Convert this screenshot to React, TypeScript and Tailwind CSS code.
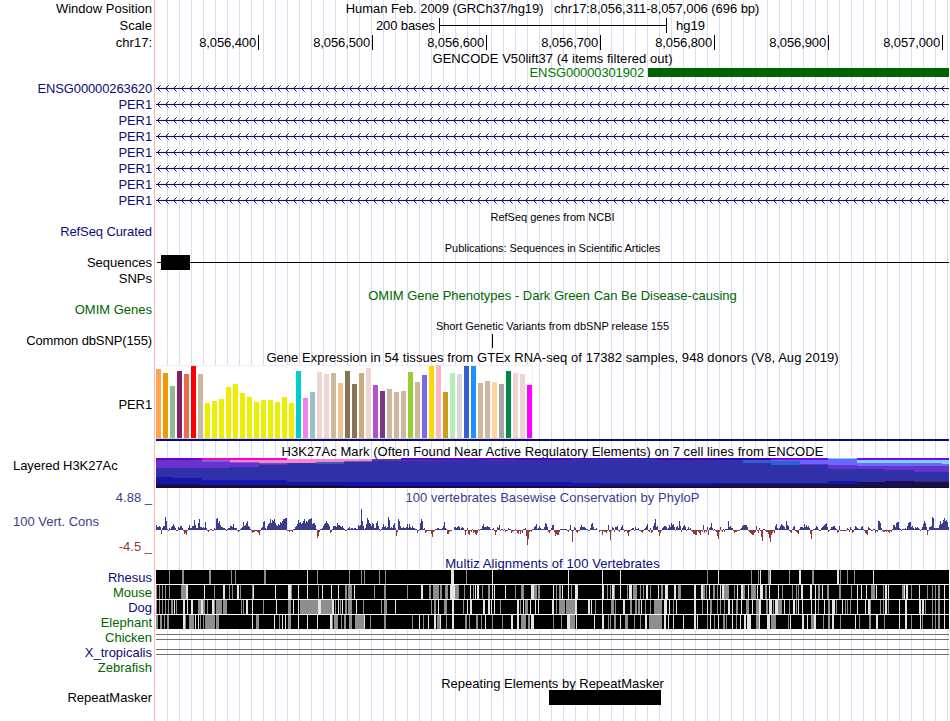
import type { ReactNode } from "react";
import clsx from "clsx";

interface RowProps {
  label?: string;
  labelClass?: string;
  className?: string;
  children?: ReactNode;
}

const NAVY = "text-[#0c0c78]";
const GREEN = "text-[#006400]";

const TICKS = ["8,056,400", "8,056,500", "8,056,600", "8,056,700", "8,056,800", "8,056,900", "8,057,000"];

const GENES = ["ENSG00000263620", "PER1", "PER1", "PER1", "PER1", "PER1", "PER1", "PER1"];

// [height, color] for each of the 54 tissues
const TISSUES: [number, string][] = [
  [69, "#ffa54f"], [65, "#ee9a00"], [52, "#8fbc8f"], [67, "#8b1c62"], [64, "#ee6a50"], [72, "#ff0000"],
  [64, "#cdb79e"], [35, "#eeee00"], [37, "#eeee00"], [39, "#eeee00"], [51, "#eeee00"], [54, "#eeee00"],
  [45, "#eeee00"], [41, "#eeee00"], [36, "#eeee00"], [38, "#eeee00"], [38, "#eeee00"], [36, "#eeee00"],
  [41, "#eeee00"], [35, "#eeee00"], [67, "#00cdcd"], [40, "#ee82ee"], [46, "#9ac0cd"], [66, "#eed5d2"],
  [64, "#eed5d2"], [65, "#cdb79e"], [55, "#eec591"], [67, "#8b7355"], [54, "#8b7355"], [65, "#cdaa7d"],
  [70, "#eed5d2"], [53, "#b452cd"], [47, "#7a378b"], [49, "#cdb79e"], [46, "#cdb79e"], [47, "#cdb79e"],
  [66, "#9acd32"], [56, "#cdb79e"], [63, "#7a67ee"], [72, "#ffd700"], [73, "#ffb6c1"], [46, "#cd9b1d"],
  [65, "#b4eeb4"], [64, "#d9d9d9"], [72, "#3a5fcd"], [72, "#1e90ff"], [55, "#cdb79e"], [57, "#cdb79e"],
  [56, "#ffd39b"], [54, "#a6a6a6"], [67, "#008b45"], [65, "#eed5d2"], [64, "#eed5d2"], [53, "#ff00ff"],
];

// [x1, x2, y1, y2, color], painted in order over the base block
const HISTONE: [number, number, number, number, string][] = [
  [156, 202, 0, 2, "#6a00d4"],
  [156, 230, 2, 10, "#6633cc"],
  [202, 287, 0, 2, "#ff00cc"],
  [202, 230, 2, 4, "#7a60d0"],
  [230, 259, 2, 4, "#ff80cc"],
  [230, 259, 4, 5, "#7a60d0"],
  [230, 259, 5, 9, "#6633cc"],
  [259, 287, 2, 5, "#ff80cc"],
  [259, 287, 5, 6, "#4a68b8"],
  [259, 287, 6, 7, "#6633cc"],
  [287, 316, 1, 5, "#ff80cc"],
  [316, 344, 1, 4, "#ff80cc"],
  [316, 344, 4, 6, "#3366a8"],
  [344, 372, 1, 3, "#ff80cc"],
  [344, 372, 3, 4, "#6060b0"],
  [372, 401, 1, 3, "#6030b0"],
  [401, 515, 0, 2, "#6a00c8"],
  [401, 429, 2, 3, "#5530b0"],
  [429, 458, 2, 3, "#4a30a8"],
  [486, 515, 2, 3, "#5030a8"],
  [515, 572, 0, 2, "#5000c8"],
  [572, 714, 0, 1, "#5000d8"],
  [657, 714, 0, 2, "#4800b8"],
  [714, 771, 0, 2, "#3000c8"],
  [743, 771, 2, 5, "#3060c8"],
  [771, 828, 0, 2, "#7a00ff"],
  [771, 800, 2, 3, "#6868ff"],
  [771, 800, 3, 7, "#3060c8"],
  [800, 828, 2, 6, "#6868ff"],
  [800, 828, 6, 7, "#6633cc"],
  [828, 857, 0, 1, "#70d0ff"],
  [828, 857, 1, 7, "#6868ff"],
  [828, 885, 7, 11, "#6633cc"],
  [857, 949, 0, 2, "#7a00ff"],
  [857, 949, 2, 5, "#78d4ff"],
  [857, 949, 5, 8, "#6868ff"],
  [885, 914, 8, 12, "#6633cc"],
  [914, 949, 8, 14, "#6633cc"],
  [942, 949, 5, 6, "#78d4ff"],
  [156, 173, 19, 30, "#1616a8"],
  [173, 202, 20, 30, "#1616a8"],
  [202, 287, 22, 30, "#1616a8"],
  [287, 543, 24, 30, "#1616a8"],
  [543, 572, 24, 30, "#1616a8"],
  [572, 771, 25, 30, "#1616a8"],
  [771, 828, 25, 30, "#1616a8"],
  [828, 857, 23, 30, "#1616a8"],
  [156, 202, 26, 30, "#181050"],
  [202, 344, 27, 30, "#181050"],
  [344, 600, 28, 30, "#181050"],
  [600, 714, 27, 30, "#181050"],
  [714, 857, 26, 30, "#181050"],
  [857, 885, 24, 30, "#181050"],
  [885, 949, 23, 30, "#181050"],
  [914, 949, 23, 24, "#303060"],
  [156, 949, 29, 30, "#180a30"],
  [156, 344, 28, 30, "#180a30"],
  [942, 949, 28, 30, "#180a30"],
];

// Runs of per-pixel scores: a..z is 1..26 above the axis, A..Z below it
const SCORES: [number, string][] = [
  [156, "eccdcDbddmiaAbacdfdbAAcbddbADCEAbe"],
  [190, "bbddjebbgkccbcbhbABAaaAAbaklgieccbbaAabbddcfbb"],
  [236, "bABAabchdegidcaACBBAABCEAbchibadfgkgjik"],
  [275, "gedfehgikkllAABAABaacdfjghfgikgihjkmhib"],
  [310, "klfggeaHFBaabdfgigfdCBadddcgeedcdbaAAabcabbabbaab"],
  [358, "edeuidabfljgfdgfbbgidaAacfcd"],
  [386, "bcmjbcbegbFBkidbbcbbcfbfcbdbbaaCAagkiabCBAAAAAA"],
  [430, "ADGBAaabbaaabdhbaDDBAA"],
  [454, "ccbcdcabcbAEAbDEABaCBDECaAaadfcccdcca"],
  [492, "abAEBcbeAaaAaBAAbaaCBAAaACDA"],
  [520, "DACaabFOIBABaacdfabdbaaacgfcBCAbeeBFDEEBaaa"],
  [563, "aaaaABaeALAcbBCAAcecccbaaAAbfgcaab"],
  [599, "BAAEABBCAeBJAcbBccdABaceaBAACFBAabbAcaabAA"],
  [641, "BCAabdfABbCBdgkcdBFCAbcddcabecgefcAcdbidBbdecAacab"],
  [691, "ABDDEEABCEABeCABcEbcgbAaABFIBcABaBaaaicdbBA"],
  [732, "bACBBAAAabdeeeecABCDEECBdACbAGKFD"],
  [763, "aaABBDHLECACdfbabdfedcaiedABCacdABCDacccBCDBABA"],
  [803, "bfcecdbDIAaabdcaAAbcdefgcBAaccddbaCBdAAAAAAAbaBcabba"],
  [852, "CBadcbaaacdaACDEcbaAAaaCABiigbABBABABCABaa"],
  [893, "eecghhbaAaaabadghhcdbacbcbaAacfigcEAccdmlaAafedc"],
  [934, "bbbbbeifgjlijhcdD"],
];

// Stripes on the alignment rows: x position, shade (g grey / w white), width
const SPECIES = [
  {
    name: "Rhesus",
    color: NAVY,
    stripes:
      "169g1 182g2 209g2 231g1 235g1 264g2 307w1 317g1 349g1 361g1 364g1 379g1 385g1 451w3 466g1 492w1 568w1 602w1 620w1 707g1 718w1 751g1 758g1 760w1 768g2 770w1 789g1 799w2 812g2 837w2 840g1 847g1 854g1 873w1",
  },
  {
    name: "Mouse",
    color: GREEN,
    stripes:
      "156g1 159g1 162g1 165g1 169g1 181g5 186w2 204w1 214g1 223w2 229g1 232g1 237w2 240g1 252g1 253w1 275w1 288w3 291g1 298w1 307w1 318g1 322w1 331w1 338w1 345g2 348g4 354w1 374g1 384g2 407g1 421w2 429g2 433g6 440g2 445g3 450w5 455g4 464g1 470w1 473g1 475w1 477w2 482g1 488g2 492w1 494w1 505w1 515g1 521g3 531w3 534g3 538g2 553w1 556g1 559g2 562w1 568w1 571g1 575w3 602w2 607g1 610g1 612w2 614g1 620w1 627g1 629w3 633g4 640g1 643g1 646w2 650g1 658w1 661g2 665w3 674w2 678g3 694w2 701w2 703g2 706g1 709w1 713g2 717g1 720w1 722w2 724g5 734g1 737w1 741w2 743g2 748w1 751g5 757w1 760w3 765g2 769w1 778w1 782g1 792g1 796g1 798g1 801w2 810w2 815w1 818g2 822w1 827g2 839g2 851g1 857w1 861w1 866w1 871g4 876w1 883g1 885w2 888w1 902g2 904w1 906w2 911g1 919w1 927g1 932g1 935g1 938g2 944w1",
  },
  {
    name: "Dog",
    color: NAVY,
    stripes:
      "156g1 159g1 162g1 165g1 168g1 171g2 174w1 176g1 183w2 187w1 191w2 198g3 201w2 203g2 207g1 212w2 214g1 216g6 223g4 241g1 243g1 246w2 252w1 263g1 276w1 288g3 293w1 298w1 300g33 318w3 332w2 335g1 338w1 340g1 342w1 345g2 348g4 356w1 363g1 381g1 384g3 395w1 431g1 434g2 438w1 444g3 452w2 463g1 467w1 470w2 483w2 488w2 491w1 494w1 500g1 517w2 520g1 523w1 525g3 530w1 535w1 538w1 552w2 556g1 559g6 566g9 575w2 588w2 591w1 595g1 602w1 611g3 615g1 623w2 630g2 635g2 638g2 641w1 645g1 650g1 654g3 657g5 664w3 669w1 673g1 676w1 694w2 702g1 707w1 710g2 717g1 720g1 724g1 728w2 732w1 736g2 741w1 746g3 752w1 756g4 759w2 766g2 769w3 773g1 775w3 778g4 784w1 789g1 793w2 796g1 798w1 802w1 811w1 815w1 818g1 824w1 828g2 832w3 836g1 842w1 845g1 847g1 850g1 857w1 865w1 868w2 870g1 880g1 883g1 885w2 888g1 899w1 905w2 919w2 922w2 925g1 932g1 935g1 938g2 944w1",
  },
  {
    name: "Elephant",
    color: GREEN,
    stripes:
      "156g2 160g2 164g1 167g2 183w2 185g1 189g5 195w1 198w1 200g1 203g1 205g10 216g3 252w1 256g3 274w1 279g1 282w1 285w1 288g3 298w1 307w1 317w1 330w2 332g1 334g4 341g1 344g2 349g3 355g9 364w1 370g1 384g2 412g1 419w1 423g1 428w1 434w2 437g3 440w1 446g1 452w2 465g2 469g1 476g2 481g1 485w1 492g1 502g1 511w2 517w2 521g5 528g2 531w3 553g1 561g1 567w3 570g5 576w1 594w1 602w2 608g1 610g1 614g2 620w1 625g3 634g1 640g1 645w2 649g13 664w2 668w1 673w1 683w1 694w2 697w1 707g1 710w1 714g1 718w1 723g2 726g1 732w1 736g1 740w1 744w2 747w4 756g3 759w1 767w3 771g5 788g1 790w1 802w2 807w1 811g3 814w2 823g1 828g2 832w2 840g1 855w1 859g1 869g2 876w2 884g1 899w1 905w2 911g1 920w1 922g1 932g1 935g1 938g2 944w1",
  },
];

function Row({ label, labelClass, className, children }: RowProps) {
  return (
    <div className={clsx("flex shrink-0", className)}>
      <div className={clsx("flex w-[152px] shrink-0 items-center justify-end", labelClass)}>{label}</div>
      <div className="ml-[3px] flex w-[795px] shrink-0 items-center justify-center">{children}</div>
    </div>
  );
}

function Arrows() {
  const heads = Array.from({ length: 99 }, (_, i) => 2 + i * 8);
  return (
    <svg width="795" height="16" shapeRendering="crispEdges">
      <rect x="1" y="8" width="793" height="1" fill="#0c0c78" />
      <path d={heads.map((x) => `M${x} 8h1v1h-1zM${x + 1} 7h1v3h-1zM${x + 2} 6h1v1h-1zM${x + 2} 10h1v1h-1z`).join("")} fill="#0c0c78" />
      <path d={heads.map((x) => `M${x + 3} 5h1v1h-1zM${x + 3} 11h1v1h-1z`).join("")} fill="#8c8cc8" />
    </svg>
  );
}

function Expression() {
  return (
    <svg width="795" height="76" shapeRendering="crispEdges">
      <rect x="1" y="0" width="377" height="74" fill="#f0f0f0" />
      <rect x="1" y="1" width="376" height="72" fill="#fff" />
      <rect x="1" y="73" width="377" height="1" fill="#d0d0d0" />
      {TISSUES.map(([h, fill], i) => (
        <rect key={i} x={1 + i * 7} y={73 - h} width="5" height={h} fill={fill} />
      ))}
      <rect x="1" y="74" width="793" height="2" fill="#0c0c78" />
    </svg>
  );
}

function Histone() {
  return (
    <svg width="795" height="30" viewBox="155 0 795 30" shapeRendering="crispEdges">
      <rect x="156" y="1" width="793" height="29" fill="#3030a8" />
      {HISTONE.map(([x1, x2, y1, y2, fill], i) => (
        <rect key={i} x={x1} y={y1} width={x2 - x1} height={y2 - y1} fill={fill} />
      ))}
    </svg>
  );
}

function Conservation() {
  let up = "";
  let down = "";
  SCORES.forEach(([start, run], r) => {
    const end = SCORES[r + 1]?.[0] ?? 949;
    for (let i = 0; i < run.length && start + i < end; i++) {
      const c = run.charCodeAt(i);
      const x = start + i;
      if (c >= 97) up += `M${x} 25h1v${96 - c}h-1z`;
      else down += `M${x} 25h1v${c - 64}h-1z`;
    }
  });
  return (
    <svg width="795" height="50" viewBox="155 0 795 50" shapeRendering="crispEdges">
      <path d={up} fill="#3c3c8c" />
      <path d={down} fill="#8c3c3c" />
    </svg>
  );
}

function Alignment({ stripes }: { stripes: string }) {
  return (
    <svg width="795" height="15" viewBox="155 0 795 15" shapeRendering="crispEdges">
      <rect x="156" y="0" width="793" height="15" fill="#fff" />
      <rect x="156" y="0" width="793" height="14" fill="#000" />
      {stripes.split(" ").map((s) => (
        <rect key={s} x={s.slice(0, 3)} y="0" width={s.slice(4)} height="14" fill={s[3] === "g" ? "#8e8e8e" : "#e4e4e4"} />
      ))}
    </svg>
  );
}

function DoubleLine() {
  return (
    <div className="flex h-[15px] w-[793px] flex-col pt-1">
      <div className="h-1.5 border-y border-[#707070] bg-transparent" />
    </div>
  );
}

export default function App() {
  return (
    <div className="relative h-[721px] w-[950px] overflow-hidden bg-white font-['Liberation_Sans',sans-serif] text-[13px] leading-none whitespace-pre text-black">
      {/* guide lines behind the tracks */}
      <div className="absolute top-0 left-[154px] h-[721px] w-px bg-[#ffb4b4]" />
      <div className="absolute top-0 left-[156px] h-[721px] w-[793px] bg-[repeating-linear-gradient(to_right,transparent_0px,transparent_11px,#dcdcf5_11px,#dcdcf5_12px)]" />

      <div className="relative flex flex-col">
        <Row label="Window Position" className="h-[17px]">
          <span className="tracking-[-0.06px]">Human Feb. 2009 (GRCh37/hg19)   chr17:8,056,311-8,057,006 (696 bp)</span>
        </Row>
        <Row label="Scale" className="h-[17px]">
          <div className="flex w-full items-center">
            <span className="w-[280px] text-right tracking-[-0.1px]">200 bases</span>
            <div className="ml-1 flex h-[15px] w-[228px] items-center border-x border-black">
              <div className="h-px w-full bg-black" />
            </div>
            <span className="ml-[9px]">hg19</span>
          </div>
        </Row>
        <Row label="chr17:" className="h-4">
          <div className="flex w-full">
            {TICKS.map((t, i) => (
              <div key={t} className={clsx("flex h-[15px] shrink-0 items-center justify-end border-r border-black pr-[2px] tracking-[-0.12px]", i === 0 ? "w-[104px]" : "w-[114px]")}>
                {t}
              </div>
            ))}
          </div>
        </Row>
        <Row className="h-4">
          <span className="tracking-[0.04px]">GENCODE V50lift37 (4 items filtered out)</span>
        </Row>
        <Row className="h-3.5">
          <div className="flex h-full w-full items-start">
            <span className="w-[489px] text-right tracking-[-0.13px] text-[#007800]">ENSG00000301902</span>
            <div className="mt-0.5 ml-1 h-[9px] w-[301px] bg-[#006400]" />
          </div>
        </Row>
        {GENES.map((g, i) => (
          <Row key={i} label={g} labelClass={clsx(NAVY, "tracking-[-0.12px]")} className="h-4">
            <Arrows />
          </Row>
        ))}

        <Row className="h-4 pt-0.5 text-[11px]">
          <span>RefSeq genes from NCBI</span>
        </Row>
        <Row label="RefSeq Curated" labelClass={clsx(NAVY, "pb-0.5 tracking-[-0.1px]")} className="h-4" />
        <Row className="h-[15px] pt-0.5 text-[11px]">
          <span className="tracking-[-0.05px]">Publications: Sequences in Scientific Articles</span>
        </Row>
        <Row label="Sequences" className="h-[15px]">
          <div className="flex w-full items-center pl-0.5">
            <div className="h-px w-1 bg-black" />
            <div className="h-[15px] w-[29px] bg-black" />
            <div className="h-px w-[759px] bg-black" />
          </div>
        </Row>
        <Row label="SNPs" className="h-4" />
        <Row className="h-4 pt-0.5">
          <span className={GREEN}>OMIM Gene Phenotypes - Dark Green Can Be Disease-causing</span>
        </Row>
        <Row label="OMIM Genes" labelClass={clsx(GREEN, "pb-0.5")} className="h-4" />
        <Row className="h-[15px] pt-0.5 text-[11px]">
          <span>Short Genetic Variants from dbSNP release 155</span>
        </Row>
        <Row label="Common dbSNP(155)" labelClass="tracking-[-0.12px]" className="h-[15px]">
          <div className="flex w-full pl-[337px]">
            <div className="h-3.5 w-px bg-black" />
          </div>
        </Row>
        <Row className="h-[17px] pt-0.5">
          <span className="tracking-[0.055px]">Gene Expression in 54 tissues from GTEx RNA-seq of 17382 samples, 948 donors (V8, Aug 2019)</span>
        </Row>
        <Row label="PER1" labelClass="pt-[3px] tracking-[-0.12px]" className="h-[76px]">
          <Expression />
        </Row>
        <Row className="h-[17px] pt-[3px]">
          <span className="tracking-[0.05px]">H3K27Ac Mark (Often Found Near Active Regulatory Elements) on 7 cell lines from ENCODE</span>
        </Row>
        <Row label="Layered H3K27Ac" labelClass="h-[15px] !justify-start pl-[13px] tracking-[-0.06px]" className="h-[30px]">
          <Histone />
        </Row>

        <div className="flex h-[67px] text-[#3c3c8c]">
          <div className="flex w-[152px] shrink-0 flex-col">
            <div className="flex h-[19px] items-center justify-end">4.88 _</div>
            <div className="mt-1.5 flex h-[17px] items-center pl-[13px]">100 Vert. Cons</div>
            <div className="mt-2 flex h-[17px] items-center justify-end text-[#8c3c3c]">-4.5 _</div>
          </div>
          <div className="ml-[3px] flex w-[795px] flex-col items-center">
            <span className="flex h-[17px] items-center pt-px tracking-[0.04px]">100 vertebrates Basewise Conservation by PhyloP</span>
            <Conservation />
          </div>
        </div>

        <Row className="h-[15px]">
          <span className={clsx(NAVY, "pt-px tracking-[0.1px]")}>Multiz Alignments of 100 Vertebrates</span>
        </Row>
        {SPECIES.map((s) => (
          <Row key={s.name} label={s.name} labelClass={s.color} className="h-[15px]">
            <Alignment stripes={s.stripes} />
          </Row>
        ))}
        <Row label="Chicken" labelClass={GREEN} className="h-[15px]">
          <DoubleLine />
        </Row>
        <Row label="X_tropicalis" labelClass={NAVY} className="h-[15px]">
          <DoubleLine />
        </Row>
        <Row label="Zebrafish" labelClass={GREEN} className="h-[15px]" />
        <Row className="h-[15px] pt-0.5">
          <span>Repeating Elements by RepeatMasker</span>
        </Row>
        <Row label="RepeatMasker" className="h-[15px]">
          <div className="flex w-full pl-[394px]">
            <div className="h-[15px] w-28 bg-black" />
          </div>
        </Row>
      </div>
    </div>
  );
}
